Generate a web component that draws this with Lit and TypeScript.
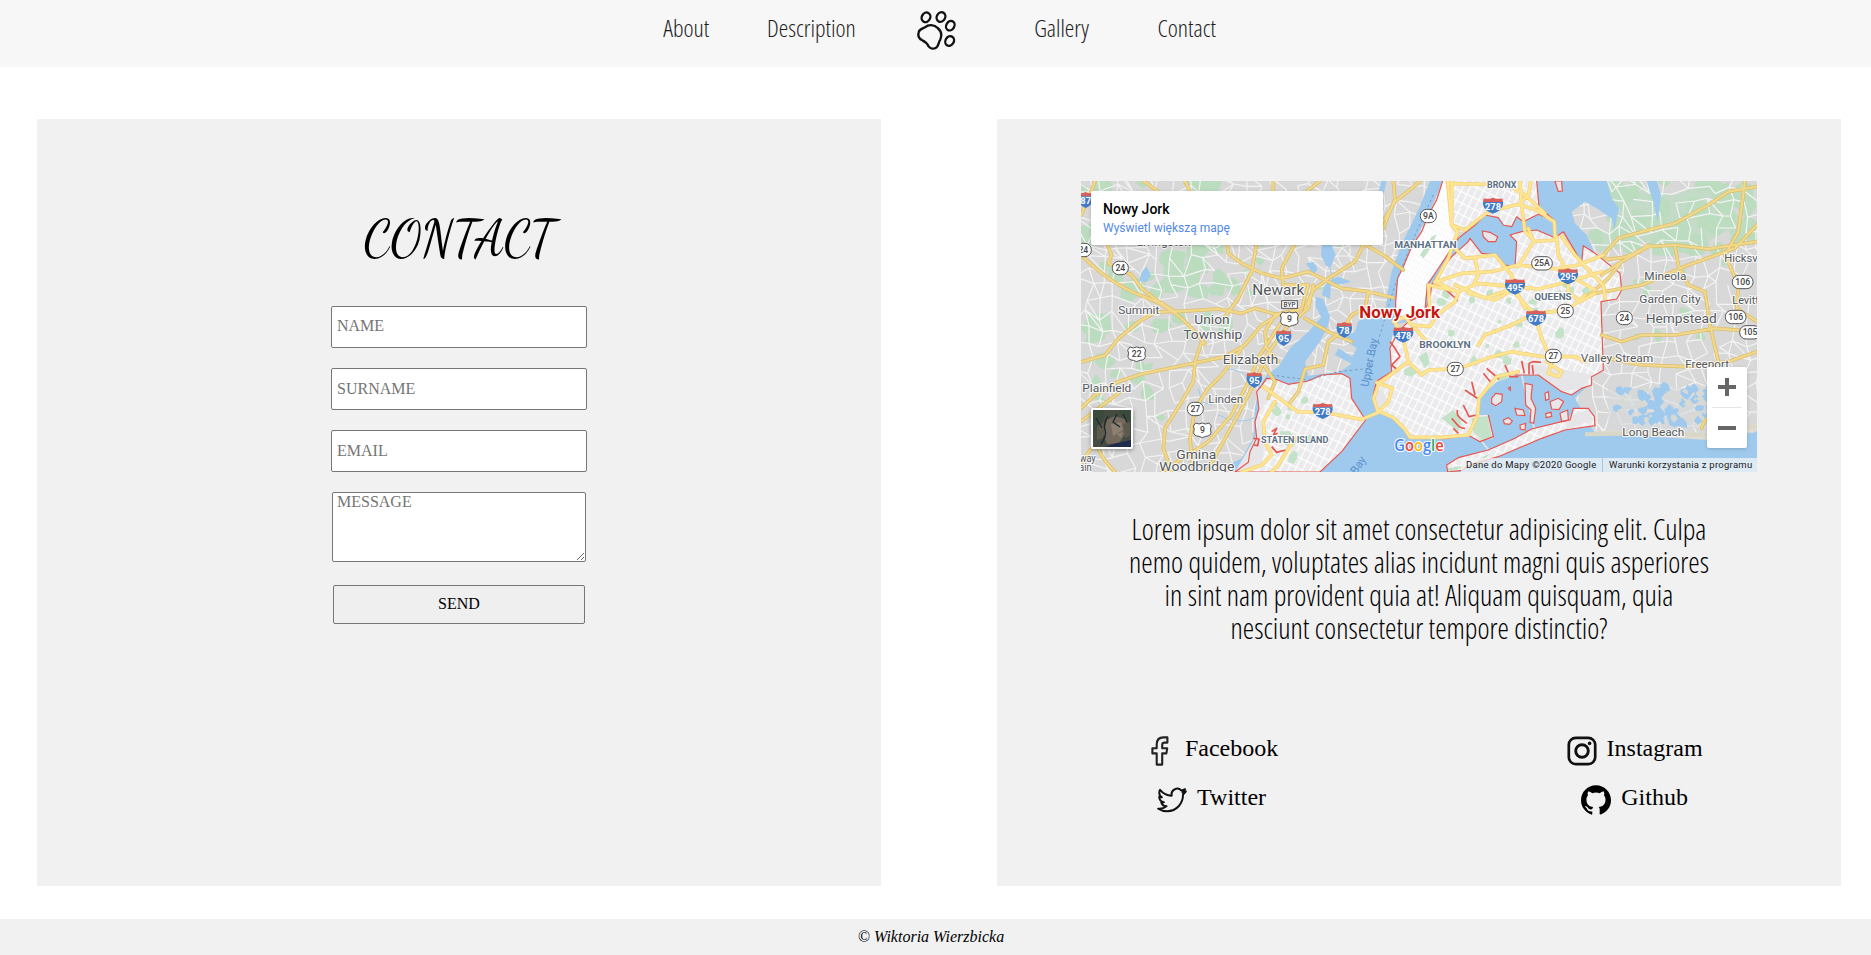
import { LitElement, html, css, svg } from 'lit';
import { customElement } from 'lit/decorators.js';

const rng = (seed: number) => () => {
  seed = (seed * 1664525 + 1013904223) % 4294967296;
  return seed / 4294967296;
};

/* Irregular net of local streets */
function mesh(x0: number, y0: number, x1: number, y1: number, cell: number, jitter: number, skip: number, seed: number) {
  const r = rng(seed);
  const cols = Math.ceil((x1 - x0) / cell) + 1;
  const rows = Math.ceil((y1 - y0) / cell) + 1;
  const pt: number[][][] = [];
  for (let j = 0; j < rows; j++) {
    pt.push([]);
    for (let i = 0; i < cols; i++)
      pt[j].push([Math.round(x0 + i * cell + (r() - 0.5) * jitter), Math.round(y0 + j * cell + (r() - 0.5) * jitter)]);
  }
  let d = '';
  for (let j = 0; j < rows; j++)
    for (let i = 0; i < cols; i++) {
      if (i + 1 < cols && r() > skip) d += `M${pt[j][i]}L${pt[j][i + 1]}`;
      if (j + 1 < rows && r() > skip) d += `M${pt[j][i]}L${pt[j + 1][i]}`;
      if (i + 1 < cols && j + 1 < rows && r() < 0.22) d += `M${pt[j][i]}L${pt[j + 1][i + 1]}`;
    }
  return d;
}

function blobs(n: number, x0: number, y0: number, w: number, h: number, min: number, max: number, seed: number) {
  const r = rng(seed);
  let d = '';
  for (let k = 0; k < n; k++) {
    const cx = x0 + r() * w, cy = y0 + r() * h, s = min + r() * (max - min);
    for (let a = 0; a < 8; a++) {
      const q = s * (0.55 + r() * 0.6);
      d += `${a ? 'L' : 'M'}${Math.round(cx + Math.cos(a * 0.785) * q)} ${Math.round(cy + Math.sin(a * 0.785) * q)}`;
    }
    d += 'Z';
  }
  return d;
}

const SUBURB_STREETS = mesh(0, 0, 2060, 900, 42, 32, 0.25, 7);
const PARKS_WEST = blobs(50, 20, 20, 460, 460, 16, 48, 11) + blobs(14, 20, 520, 260, 220, 12, 38, 5) + blobs(8, 480, 180, 350, 180, 8, 20, 8);
const PARKS_EAST = blobs(46, 1560, 20, 480, 200, 16, 50, 21) + blobs(12, 1600, 250, 440, 260, 8, 20, 33);
const PARKS_CITY = blobs(22, 1080, 300, 460, 260, 6, 18, 41) + blobs(9, 590, 660, 220, 200, 8, 24, 43);
const MARSH_WATER = blobs(44, 1625, 640, 300, 105, 8, 22, 51);
const MARSH_LAND = blobs(34, 1630, 645, 300, 95, 5, 13, 57);

const MANHATTAN = 'M1103 18L1085 75 1060 120 1040 170 1010 215 985 275 968 310 962 380 962 420 1010 440 1050 410 1065 340 1110 270 1150 215 1140 160 1125 100 1130 18Z';
const BRONX = 'M1110 18L1385 18 1388 60 1392 95 1420 100 1442 150 1430 130 1390 118 1345 140 1325 125 1310 155 1285 150 1270 128 1230 120 1200 150 1150 160 1140 200 1125 150Z';
const QUEENS = 'M1070 330L1095 290 1130 245 1180 200 1185 190 1220 230 1265 240 1290 270 1320 275 1325 200 1305 180 1340 170 1385 165 1430 185 1460 170 1485 215 1515 262 1525 212 1560 235 1635 295 1640 345 1625 372 1578 380 1585 586 1550 605 1550 630 1520 640 1490 660 1460 650 1390 600 1320 600 1265 620 1210 670 1210 720 1240 720 1255 785 1215 800 1180 781 1105 791 1005 788 990 763 955 728 905 708 895 658 905 618 950 590 945 518 970 470 1000 440 1045 420 1065 370Z';
const STATEN = 'M560 632L575 610 600 612 640 628 700 618 740 600 800 596 825 610 830 670 872 735 800 830 735 891 480 891 520 862 525 830 545 790 540 740 552 700 545 650Z';
const BAY = 'M1065 18L1033 98 980 208 950 288 937 358 930 418 890 425 850 438 840 470 800 490 845 520 832 545 790 520 780 540 830 566 795 590 700 602 690 560 735 500 760 450 765 420 740 425 700 470 645 520 610 575 575 600 550 640 540 700 535 790 500 850 470 865 480 891 2046 891 2046 770 1900 795 1560 775 1500 670 1550 620 1520 640 1460 650 1390 600 1320 600 1265 620 1210 670 1210 720 1240 720 1255 790 1215 800 1180 781 1105 791 1005 788 990 763 955 728 905 708 895 658 905 618 950 590 945 518 960 440 962 380 968 310 1010 215 1060 120 1103 18Z';
const EAST_RIVER = 'M945 450L1000 440 1045 425 1062 370 1068 330 1095 290 1130 245 1180 200 1185 190 1220 235 1265 240 1290 270 1320 275 1325 200 1305 180 1340 170 1385 165 1440 188 1465 170 1520 262 1525 212 1560 235 1535 180 1500 145 1490 110 1530 80 1565 100 1610 130 1618 165 1632 100 1610 70 1595 18 1385 18 1392 95 1442 150 1390 118 1345 140 1325 125 1310 155 1285 150 1270 128 1230 120 1200 150 1150 190 1125 225 1085 290 1055 325 1050 400 1010 425Z';
const ROCKAWAY = 'M1115 870L1118 891 1160 886 1190 868 1270 845 1400 790 1470 765 1560 752 1558 725 1540 700 1495 700 1485 735 1460 740 1370 762 1320 790 1240 825 1150 848Z';
const ISLANDS = 'M1250 670L1262 655 1282 658 1280 680 1262 692 1250 685ZM1285 735L1300 728 1312 738 1304 748 1288 746ZM1350 625L1372 630 1368 670 1382 700 1376 745 1365 742 1368 705 1352 690ZM1425 680L1450 670 1466 680 1452 704 1430 702ZM1320 700L1345 705 1350 722 1325 720ZM1410 655L1420 650 1422 672 1412 676ZM1455 715L1478 705 1480 735 1460 740ZM1335 750L1352 745 1350 765 1336 762ZM1300 640L1306 636 1306 646ZM1222 168L1245 172 1268 185 1262 200 1240 200 1225 185ZM1440 18L1450 50 1462 48 1460 18ZM1412 716L1428 712 1430 724 1414 728Z';
const PIERS = 'M1170 645L1210 672M1190 620L1200 660M1225 595L1250 625M1235 580L1272 612M1290 570L1305 605 1330 605M1340 558L1348 595M1362 565L1375 560 1398 562M1362 598L1362 565M1375 598L1372 570M1165 690L1182 725 1205 720M1148 705C1140 725 1165 735 1175 745M1130 730C1145 745 1150 760 1170 760M1135 760L1150 775M945 500L960 520 975 545 950 570 968 585M590 770L605 760 595 780 608 775M590 815L605 832 632 825M535 790L552 792 548 812 536 810M1055 330C1090 325 1120 345 1148 378';

const HIGHWAYS_OUTER = [
  'M18 240Q110 330 200 362T350 460 380 500L360 560 355 620 320 680 270 760 265 820 290 891',
  'M75 160L110 240 100 265 170 300 200 340 240 372 300 410 430 402 500 415 540 400 600 418 680 402',
  'M18 561L90 541 130 491 190 441 240 412 300 408',
  'M18 700L60 660 130 620 200 597 330 570 450 545 510 510 560 450 610 420',
  'M18 120L45 60 60 18', 'M205 18L250 50', 'M330 18L345 50',
  'M455 200L460 235 500 265 560 295 620 310 700 290 800 340 880 350 955 368',
  'M545 205L530 290 490 370 450 425', 'M18 740L70 700 150 640',
  'M500 520L440 600 400 640 360 700 345 790 352 870', 'M560 560L600 620 580 670',
  'M715 330L700 400 640 450 575 540 540 620 500 700 450 790 395 891',
  'M700 330L680 400 620 440 555 540 520 620 470 720 400 800 260 891',
  'M870 200L840 260 760 310 715 345 690 400', 'M855 200L925 240 985 285',
  'M860 215L930 130 960 80 1010 40 1035 18', 'M595 18L595 50', 'M735 18L695 50',
  'M660 205L620 280 625 330 700 330', 'M955 20L960 70 925 160', 'M880 350L870 400 830 420 800 470 760 500 745 570 690 582 670 650 640 690',
  'M690 430L760 470 830 500', 'M18 870Q60 790 70 820T120 891', 'M600 420L570 470 575 520 610 560',
  'M1585 240L1630 190 1700 170 1800 145 1900 90 1960 50 2046 35',
  'M1580 300L1640 260 1720 215 1800 210 1900 222 2046 200', 'M1560 355L1700 330 1840 270 1980 220 2046 150',
  'M1800 215L1810 270 1840 330 1890 350 1905 450 1930 560', 'M2010 18L1990 170 1950 240 1990 330 1985 400 2046 440',
  'M1580 480L1640 500 1700 480 1800 480 1920 460 2046 470', 'M1570 545L1700 570 1830 575 1960 560 2046 530',
  'M1640 260L1600 310 1530 370', 'M1590 250Q1650 260 1720 210', 'M1880 760Q1890 720 1920 730',
];
const HIGHWAYS_CITY = [
  'M565 635L640 690 670 711 740 711 860 733 910 712 940 680 952 640 905 622', 'M600 680L565 740 570 800 590 840 560 870 500 891', 'M660 790L610 870 590 891',
  'M1000 560L912 625 896 670 908 708 955 728 990 763 1005 787 1100 787 1180 780 1208 720 1212 670 1265 605 1330 590',
  'M960 441L985 490 1000 560 1040 600 1060 585 1150 581 1250 545 1310 530 1400 545 1500 545 1530 560',
  'M955 440L990 425 1010 450 1065 455 1085 420 1140 380 1150 352 1080 320',
  'M1080 322L1160 295 1250 290 1330 270 1440 282 1510 270 1585 240',
  'M1060 330L1150 350 1210 325 1390 342 1480 320 1580 290', 'M1180 355L1260 375 1320 340 1350 400',
  'M1140 220L1170 250 1260 240 1310 300 1325 360 1380 420 1400 490 1430 560 1420 595 1450 605 1460 590 1415 560',
  'M1360 160L1375 200 1330 275', 'M1375 200L1440 195', 'M1445 185L1450 240 1480 300 1480 350 1515 380 1560 355',
  'M1210 510L1230 480 1310 450 1380 415 1480 405 1530 360', 'M1200 250L1210 300 1195 330', 'M1300 345L1230 370 1140 330',
  'M1080 322L1120 250 1148 170 1130 150 1130 18', 'M1118 18L1130 150 1170 165 1240 110 1330 88 1385 105 1438 140 1440 185',
  'M1120 25L1300 30 1350 60 1410 115', 'M1335 18L1340 90 1350 170 1375 195', 'M1368 18L1360 60 1330 90',
  'M1460 185L1500 240 1545 290 1585 330 1590 370', 'M1480 300L1560 345', 'M1060 330L1065 410', 'M1020 460L1060 505',
];

type Label = [string, number, number, number, number?];
const TOWNS: Label[] = [
  ['Livingston', 185, 213, 162], ['Newark', 532, 360, 156, 42], ['Summit', 130, 417, 123], ['Union', 358, 448, 106, 39],
  ['Township', 325, 493, 177, 39], ['Elizabeth', 443, 566, 167, 39], ['Plainfield', 22, 650, 147], ['Linden', 400, 684, 105],
  ['Gmina', 304, 852, 120, 39], ['Woodbridge', 253, 889, 225, 39], ['way', 14, 860, 48], ['ain', 12, 889, 38],
  ['Mineola', 1708, 316, 126], ['Garden City', 1693, 383, 184], ['Hempstead', 1712, 445, 213, 41], ['Hicksville', 1948, 262, 142],
  ['Levittown', 1972, 386, 140], ['Valley Stream', 1517, 562, 218], ['Freeport', 1831, 579, 131], ['Long Beach', 1642, 782, 186],
];
const BOROUGHS: Label[] = [
  ['BRONX', 1236, 39, 88], ['MANHATTAN', 958, 220, 187], ['QUEENS', 1378, 374, 112], ['BROOKLYN', 1033, 519, 154], ['STATEN ISLAND', 558, 803, 202],
];
const INTERSTATES: [string, number, number][] = [
  ['87', 32, 76], ['278', 1254, 93], ['495', 1320, 336], ['295', 1479, 305], ['678', 1383, 430], ['478', 985, 480],
  ['78', 808, 466], ['95', 626, 490], ['95', 538, 616], ['278', 743, 709],
];
const ROUTES: [string, number, number][] = [
  ['24', 25, 225], ['24', 136, 279], ['9A', 1060, 123], ['25A', 1401, 265], ['25', 1471, 408], ['24', 1648, 429], ['27', 1435, 543],
  ['27', 1141, 582], ['106', 2003, 321], ['106', 1982, 426], ['105', 2025, 472], ['27', 361, 702],
];
const US_ROUTES: [string, number, number][] = [['22', 185, 538], ['9', 643, 433], ['9', 382, 766]];

@customElement('city-map')
class CityMap extends LitElement {
  static styles = css`
    :host { display: block; position: relative; width: 676px; height: 291px; overflow: hidden; font-family: Roboto, sans-serif; }
    .canvas { display: block; width: 676px; height: 291px; }
    .town { fill: #55585c; stroke: #fff; stroke-opacity: .85; stroke-width: 6px; paint-order: stroke; stroke-linejoin: round; }
    .borough { fill: #5d7084; font-weight: 700; font-size: 27px; stroke: #fff; stroke-width: 6px; paint-order: stroke; stroke-linejoin: round; }
    .city { fill: #c5170f; font-weight: 700; font-size: 52px; stroke: #fff; stroke-width: 8px; paint-order: stroke; stroke-linejoin: round; }
    .water { fill: #5a91cf; font-size: 34px; }
    .shield { fill: #fff; font-weight: 700; font-size: 28px; text-anchor: middle; }
    .route { fill: #444; font-weight: 500; font-size: 26px; text-anchor: middle; }
    .byp { font-size: 19px; }
    .google { font-family: "Open Sans", sans-serif; font-weight: 600; font-size: 48px; stroke: #fff; stroke-width: 6px; paint-order: stroke; }
    .card { position: absolute; left: 10px; top: 10px; width: 292px; height: 54px; box-sizing: border-box; padding: 9px 12px; background: #fff; border-radius: 2px; box-shadow: 0 1px 4px -1px rgba(0,0,0,.3); }
    .name { font-size: 14px; line-height: 18px; font-weight: 500; color: #000; }
    .more { font-size: 12px; line-height: 20px; color: #5288e8; }
    .thumb { position: absolute; left: 10px; top: 227px; width: 42px; height: 41px; box-sizing: border-box; border: 2px solid #fff; border-radius: 2px; box-shadow: 0 1px 4px rgba(0,0,0,.4); overflow: hidden; }
    .scene { display: block; width: 38px; height: 37px; }
    .zoom { position: absolute; left: 626px; top: 186px; width: 40px; height: 81px; background: #fff; border-radius: 2px; box-shadow: 0 1px 4px -1px rgba(0,0,0,.3); }
    .signs { display: block; }
    .legal { position: absolute; right: 0; bottom: 0; height: 14px; width: 296px; display: flex; align-items: center; background: rgba(245,245,245,.72); font-size: 9.5px; letter-spacing: .26px; line-height: 14px; color: #222; white-space: nowrap; }
    .legal span { box-sizing: border-box; }
    .data { width: 141px; padding-left: 5px; }
    .terms { padding-left: 6px; border-left: 1px solid #a9c4dc; }
  `;
  render() {
    const label = (cls: string) => ([t, x, y, w, s]: Label) =>
      svg`<text class=${cls} x=${x} y=${y} textLength=${w} lengthAdjust="spacingAndGlyphs" font-size=${s ?? 32}>${t}</text>`;
    return html`
      <svg class="canvas" viewBox="18 18 2028 873" preserveAspectRatio="none">
        <defs>
          <pattern id="gridA" width="20" height="31" patternUnits="userSpaceOnUse" patternTransform="rotate(26)">
            <rect width="20" height="31" fill="#ebebed"></rect><path d="M0 0H20M0 0V31" stroke="#fff" stroke-width="7"></path>
          </pattern>
          <pattern id="gridM" width="9" height="18" patternUnits="userSpaceOnUse" patternTransform="rotate(28)">
            <rect width="9" height="18" fill="#fff"></rect><path d="M0 0H9M0 0V18" stroke="#eeeef0" stroke-width="2"></path>
          </pattern>
        </defs>
        <rect x="0" y="0" width="2060" height="900" fill="#d8d8d9"></rect>
        <path d=${PARKS_WEST + PARKS_EAST} fill="#bcdcc0"></path>
        <path d="M1540 180L1600 170 1660 60 1720 40 1800 60 1880 30 1960 60 1980 150 1900 200 1760 190 1640 220 1570 230Z" fill="#bcdcc0" opacity=".75"></path>
        <path d=${SUBURB_STREETS} stroke="#f3f3f3" stroke-width="3.6" fill="none"></path>
        <path d="M1600 640H1950V760H1600Z" fill="#d6d8da" opacity=".6"></path>
        <path d=${MARSH_WATER} fill="#9fcaed"></path>
        <path d=${MARSH_LAND} fill="#d9d9d4"></path>
        <path d="M1560 768L1740 766 1900 776 2046 745 2046 765 1900 800 1740 782 1530 780Z" fill="#dedbd0"></path>
        <path d=${BAY} fill="#9fcaed"></path>
        <path d="M1530 778L1740 775 1900 780 2046 752" stroke="#d9d8c8" stroke-width="12" fill="none"></path>
        <path d="M1715 18L1735 80 1748 140 1758 60 1745 18ZM740 210L770 210 782 240 765 280 752 270 738 240ZM740 360L765 372 768 325 800 328 830 320 790 305 772 312 750 330ZM692 265L716 262 728 282 718 300ZM722 365L745 372 765 425 740 428 722 395ZM200 290L215 275 228 300 215 322 192 318ZM920 18L935 18 925 60 910 50Z" fill="#9fcaed"></path>
        <path d="M430 720Q480 745 520 735T545 700M370 640L380 680 410 690M455 580Q520 590 560 640M765 280L775 320" stroke="#9fcaed" stroke-width="3" fill="none"></path>
        <path d=${MANHATTAN} fill="url(#gridM)"></path>
        <path d=${BRONX + QUEENS + STATEN + ROCKAWAY} fill="url(#gridA)"></path>
        <path d="M545 650L560 700 600 640 560 632ZM480 891L560 870 570 800 552 720 540 790ZM1390 600L1330 560 1420 575 1550 600 1520 640 1460 650ZM895 658L920 640 940 680 910 705ZM1470 765L1485 720 1540 705 1555 735Z" fill="#e6e6e8"></path>
        <path d=${EAST_RIVER} fill="#9fcaed"></path>
        <path d=${PARKS_CITY} fill="#c4e2c8"></path>
        <path d="M1190 730L1238 722 1250 785 1215 798 1195 770ZM985 585L1015 570 1030 590 1010 605 990 600ZM1030 545L1055 530 1065 565 1050 580ZM1070 185L1085 178 1060 230 1045 250 1035 240ZM1180 870L1245 835 1225 860 1120 891 1118 880ZM1100 730L1135 705 1160 740 1150 770ZM1260 600L1295 590 1300 610 1270 620Z" fill="#c4e2c8"></path>
        <path d="M1340 600L1380 770M1205 780L1245 830" stroke="#e4e4e4" stroke-width="5"></path>
        <path d=${ISLANDS} fill="#e8e8ea" stroke="#e8554e" stroke-width="3.5"></path>
        <g fill="none" stroke="#e8554e" stroke-width="3.5" stroke-linejoin="round">
          <path d=${STATEN}></path><path d=${ROCKAWAY}></path>
          <path d="M1103 18L1085 75 1060 120 1040 170 1010 215 985 275 968 310 962 380 962 420 1010 435 1050 405 1057 330 1120 235 1150 190 1200 150 1230 120 1270 128 1285 150 1310 155 1325 125 1345 140 1390 118 1442 140 1392 95 1385 18"></path>
          <path d="M1240 720L1255 785 1215 800 1180 781 1105 791 1005 788 990 763 955 728 905 708 895 658 905 618 950 590 945 518 970 470 1000 440 1045 420 1065 370 1070 330 1095 290 1130 245 1180 200 1185 190 1220 235 1265 240 1290 270 1320 275 1325 200 1305 180 1340 170 1385 165 1440 188 1465 170 1520 262 1525 212 1560 235 1635 295 1640 345 1625 372 1578 380 1585 586 1550 605 1550 630 1520 640 1490 660 1460 650 1390 600 1320 600"></path>
          <path d=${PIERS} stroke-width="5"></path>
        </g>
        <path d="M1075 60L1020 180 960 330 930 430 885 580 790 590 700 615 590 600" fill="none" stroke="#7c9cb8" stroke-width="3" stroke-dasharray="8 8"></path>
        <g fill="none" stroke-linejoin="round" stroke-linecap="round">
          <path d=${HIGHWAYS_OUTER.join('')} stroke="#dfbd66" stroke-width="11"></path>
          <path d=${HIGHWAYS_OUTER.join('')} stroke="#f0d98d" stroke-width="6.5"></path>
          <path d=${HIGHWAYS_CITY.join('')} stroke="#f5cf70" stroke-width="11"></path>
          <path d=${HIGHWAYS_CITY.join('')} stroke="#ffe694" stroke-width="7"></path>
        </g>
        ${TOWNS.map(label('town'))}
        ${BOROUGHS.map(label('borough'))}
        <text class="water" transform="translate(880 637) rotate(-79)" textLength="147" lengthAdjust="spacingAndGlyphs">Upper Bay</text>
        <text class="water" transform="translate(844 900) rotate(-57)">Bay</text>
        ${INTERSTATES.map(([t, x, y]) => {
          const w = t.length > 2 ? 30 : 23;
          return svg`<g transform="translate(${x} ${y})">
            <path d="M${-w} -12L${-w + 2} -23Q${-w / 2} -19 0 -25Q${w / 2} -19 ${w - 2} -23L${w} -12Z" fill="#d9605a"></path>
            <path d="M${-w} -12H${w}C${w + 2} 6 ${w * 0.6} 17 0 23C${-w * 0.6} 17 ${-w - 2} 6 ${-w} -12Z" fill="#3f7bc8"></path>
            <text class="shield" y="11">${t}</text></g>`;
        })}
        ${ROUTES.map(([t, x, y]) => {
          const w = t.length > 2 ? 31 : 24;
          return svg`<g transform="translate(${x} ${y})"><rect x=${-w} y="-20" width=${w * 2} height="40" rx="19" fill="#fff" stroke="#555" stroke-width="3"></rect>
            <text class="route" y="9">${t}</text></g>`;
        })}
        ${US_ROUTES.map(([t, x, y]) => svg`<g transform="translate(${x} ${y})">
            <path d="M-20 -22Q-10 -16 0 -22Q10 -16 20 -22L27 -13Q22 -4 26 6Q26 17 10 18L0 22L-10 18Q-26 17 -26 6Q-22 -4 -27 -13Z" fill="#fff" stroke="#555" stroke-width="3"></path>
            <text class="route" y="9">${t}</text></g>`)}
        <rect x="620" y="377" width="47" height="23" fill="#fff" stroke="#555" stroke-width="3"></rect>
        <text class="route byp" x="643.5" y="396" textLength="36">BYP</text>
        <text class="city" x="853" y="428" textLength="242" lengthAdjust="spacingAndGlyphs">Nowy Jork</text>
        <text class="google" x="958" y="829" textLength="148" lengthAdjust="spacingAndGlyphs"><tspan fill="#4285f4">G</tspan><tspan fill="#ea4335">o</tspan><tspan fill="#fbbc05">o</tspan><tspan fill="#4285f4">g</tspan><tspan fill="#34a853">l</tspan><tspan fill="#ea4335">e</tspan></text>
      </svg>
      <div class="card"><div class="name">Nowy Jork</div><div class="more">Wyświetl większą mapę</div></div>
      <div class="thumb">
        <svg class="scene" viewBox="0 0 38 37">
          <rect width="38" height="37" fill="#454b40"></rect>
          <path d="M0 0H12L8 14 0 22ZM26 0H38V10L30 8Z" fill="#3a4a3c"></path>
          <path d="M14 10L22 6 32 9 35 20 26 33 14 34 10 24Z" fill="#74695d"></path>
          <path d="M18 14L28 12 30 20 20 26ZM24 24L30 22 28 28Z" fill="#8d8072"></path>
          <path d="M4 16L12 12 10 28 4 30ZM30 14L37 12 37 26 32 28Z" fill="#5d5a4e"></path>
          <path d="M15 6Q10 14 12 20T8 34M24 4L20 12 27 17M3 8L9 18M30 4L34 12" fill="none" stroke="#1f2a30" stroke-width="1.4"></path>
          <path d="M12 37L24 33 38 30V37Z" fill="#1d2b4c"></path>
        </svg>
      </div>
      <div class="zoom"><svg class="signs" width="40" height="81" viewBox="0 0 40 81"><path d="M18 11h4v7h7v4h-7v7h-4v-7h-7v-4h7zM11 59h18v4H11z" fill="#666"></path><path d="M5 40.5h30" stroke="#e6e6e6"></path></svg></div>
      <div class="legal"><span class="data">Dane do Mapy ©2020 Google</span><span class="terms">Warunki korzystania z programu</span></div>
    `;
  }
}

@customElement('app-root')
class AppRoot extends LitElement {
  static styles = css`
    :host { display: flex; flex-direction: column; height: 955px; background: #fff; font-family: "Liberation Serif", serif; color: #000; }
    .top { height: 67px; background: #f7f7f7; display: flex; justify-content: center; padding-left: 2px; box-sizing: border-box; }
    .nav { display: grid; grid-template-columns: repeat(5, 125.1px); justify-items: center; font: 300 24px/33px "Open Sans", sans-serif; font-stretch: 75%; color: #1c1c1c; padding-top: 11px; }
    .paw { width: 39.3px; height: 39px; display: block; }
    .main { flex: none; height: 767px; margin: 52px 30px 33px 37px; display: grid; grid-template-columns: 844px 844px; justify-content: space-between; }
    .panel { background: #f1f1f1; display: flex; flex-direction: column; align-items: center; }
    .title { margin: 89px 0 0; height: 97.8px; font: 400 50px/62px "Dancing Script", cursive; }
    .form { display: flex; flex-direction: column; align-items: center; gap: 20px; }
    .field, .message, .send { box-sizing: border-box; font: 16px/18px "Liberation Serif", serif; border: 1px solid #767676; border-radius: 2px; margin: 0; }
    .field { width: 256px; height: 42.2px; padding: 0 5px 1px; background: #fff; }
    .message { width: 254px; height: 70px; padding: 0 4px; background: #fff; }
    ::placeholder { color: #757575; }
    .send { width: 252px; height: 39px; margin-top: 2.6px; background: #efefef; color: #000; padding: 0; }
    .map { margin-top: 62px; }
    .text { margin: 40px 0 0; text-align: center; width: 600px; font: 300 28.8px/33px "Open Sans", sans-serif; font-stretch: 75%; white-space: nowrap; }
    .links { align-self: stretch; display: grid; grid-template-columns: 400px 400px; column-gap: 23px; grid-auto-rows: 49px; justify-items: center; margin-top: 90px; padding-left: 14.6px; font-size: 24px; line-height: 28px; }
    .link { display: flex; align-items: flex-start; gap: 10px; }
    .icon { width: 30px; height: 30px; margin-top: 1.5px; display: block; }
    .foot { flex: 1; background: #f1f1f1; text-align: center; font-size: 16px; font-style: italic; line-height: 18px; padding: 9px 9px 0 0; }
  `;
  render() {
    return html`
      <header class="top">
        <nav class="nav">
          <span>About</span><span>Description</span>
          <svg class="paw" viewBox="36 33 118 117" fill="none" stroke="#111" stroke-width="7">
            <ellipse cx="63" cy="52" rx="12.5" ry="15" transform="rotate(28 63 52)"></ellipse>
            <ellipse cx="108" cy="51" rx="12.5" ry="15" transform="rotate(28 108 51)"></ellipse>
            <ellipse cx="136" cy="77" rx="12" ry="15" transform="rotate(32 136 77)"></ellipse>
            <ellipse cx="134" cy="123" rx="12.5" ry="15" transform="rotate(32 134 123)"></ellipse>
            <path d="M60 82C70 73 88 73 98 84C108 92 111 106 106 119C100 127 101 140 92 144C84 148 75 145 71 139C66 130 62 125 52 121C42 116 38 108 41 97C43 87 51 87 60 82Z"></path>
          </svg>
          <span>Gallery</span><span>Contact</span>
        </nav>
      </header>
      <main class="main">
        <section class="panel">
          <h1 class="title">CONTACT</h1>
          <form class="form">
            <input class="field" placeholder="NAME"><input class="field" placeholder="SURNAME"><input class="field" placeholder="EMAIL">
            <textarea class="message" placeholder="MESSAGE"></textarea>
            <button class="send" type="button">SEND</button>
          </form>
        </section>
        <section class="panel">
          <city-map class="map"></city-map>
          <p class="text">Lorem ipsum dolor sit amet consectetur adipisicing elit. Culpa<br>nemo quidem, voluptates alias incidunt magni quis asperiores<br>in sint nam provident quia at! Aliquam quisquam, quia<br>nesciunt consectetur tempore distinctio?</p>
          <div class="links">
            <span class="link"><svg class="icon" viewBox="0 0 30 30"><path d="M11.7 28.6V17.4H7.4V12.3H11.7V8.6C11.7 4 14.2 1.4 18.4 1.4H22.4V6.6H19.6C17.8 6.6 17.2 7.6 17.2 9V12.3H22.2L21.4 17.4H17.2V28.6Z" fill="none" stroke="#222" stroke-width="2.1" stroke-linejoin="round"></path></svg>Facebook</span>
            <span class="link"><svg class="icon" viewBox="0 0 30 30"><rect x="1.8" y="1.8" width="26.4" height="26.4" rx="7" fill="none" stroke="#111" stroke-width="2.7"></rect><circle cx="15" cy="15" r="6.3" fill="none" stroke="#111" stroke-width="2.9"></circle><circle cx="22.6" cy="7.4" r="1.8" fill="#111"></circle></svg>Instagram</span>
            <span class="link"><svg class="icon" viewBox="-1 0 26 26"><path transform="translate(0 1)" d="M23.953 4.57a10 10 0 01-2.825.775 4.958 4.958 0 002.163-2.723c-.951.555-2.005.959-3.127 1.184a4.92 4.92 0 00-8.384 4.482C7.69 8.095 4.067 6.13 1.64 3.162a4.822 4.822 0 00-.666 2.475c0 1.71.87 3.213 2.188 4.096a4.904 4.904 0 01-2.228-.616v.06a4.923 4.923 0 003.946 4.827 4.996 4.996 0 01-2.212.085 4.936 4.936 0 004.604 3.417 9.867 9.867 0 01-6.102 2.105c-.39 0-.779-.023-1.17-.067a13.995 13.995 0 007.557 2.209c9.053 0 13.998-7.496 13.998-13.985 0-.21 0-.42-.015-.63A9.935 9.935 0 0023.953 4.57z" fill="none" stroke="#111" stroke-width="1.7" stroke-linejoin="round"></path></svg>Twitter</span>
            <span class="link"><svg class="icon" viewBox="0 0 24 24"><path d="M12 .297c-6.63 0-12 5.373-12 12 0 5.303 3.438 9.8 8.205 11.385.6.113.82-.258.82-.577 0-.285-.01-1.04-.015-2.04-3.338.724-4.042-1.61-4.042-1.61C4.422 18.07 3.633 17.7 3.633 17.7c-1.087-.744.084-.729.084-.729 1.205.084 1.838 1.236 1.838 1.236 1.07 1.835 2.809 1.305 3.495.998.108-.776.417-1.305.76-1.605-2.665-.3-5.466-1.332-5.466-5.93 0-1.31.465-2.38 1.235-3.22-.135-.303-.54-1.523.105-3.176 0 0 1.005-.322 3.3 1.23.96-.267 1.98-.399 3-.405 1.02.006 2.04.138 3 .405 2.28-1.552 3.285-1.23 3.285-1.23.645 1.653.24 2.873.12 3.176.765.84 1.23 1.91 1.23 3.22 0 4.61-2.805 5.625-5.475 5.92.42.36.81 1.096.81 2.22 0 1.606-.015 2.896-.015 3.286 0 .315.21.69.825.57C20.565 22.092 24 17.592 24 12.297c0-6.627-5.373-12-12-12"></path></svg>Github</span>
          </div>
        </section>
      </main>
      <footer class="foot">© Wiktoria Wierzbicka</footer>
    `;
  }
}
